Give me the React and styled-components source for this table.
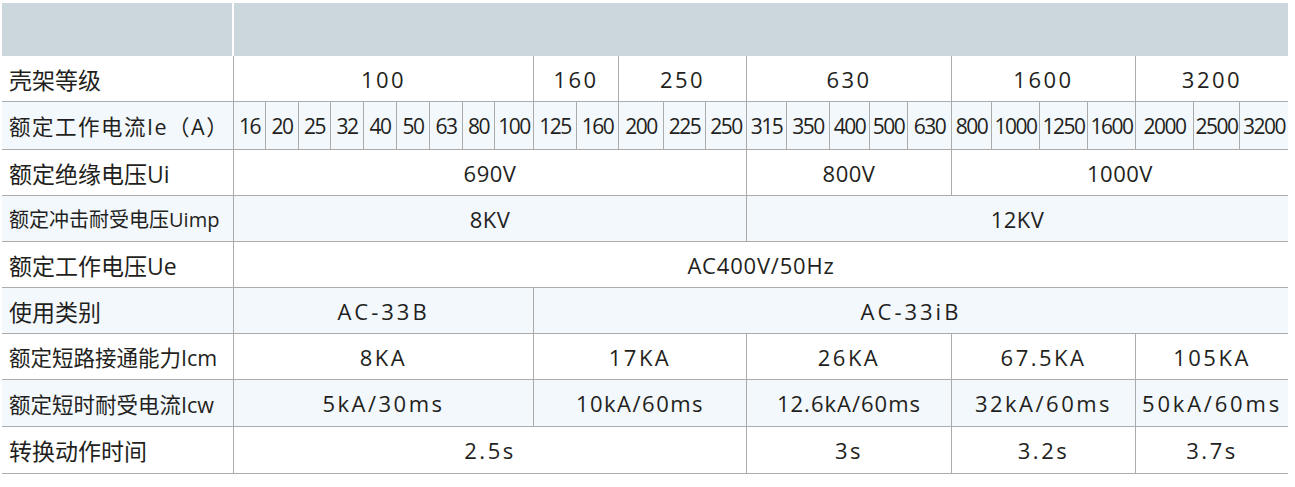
import React from "react";
import styled, { createGlobalStyle } from "styled-components";

const COLS = [231, 32, 33, 32, 33, 33, 33, 33, 32, 39, 43, 42, 45, 42, 41, 40, 43, 40, 38, 44, 40, 48, 48, 48, 58, 46, 49];
const TEMPLATE = COLS.map((w) => `${w}px`).join(" ");

const GlobalStyle = createGlobalStyle`
  html, body { margin: 0; padding: 0; background: #ffffff; }
  body {
    font-family: "Open Sans", "Noto Sans", "Noto Sans CJK SC", sans-serif;
    color: #231f20;
  }
`;

const Page = styled.div`
  padding: 3px 0 0 2px;
  width: 1286px;
`;

const HeaderRow = styled.div`
  display: flex;
  gap: 2px;
  height: 53px;
`;

const HeaderBlock = styled.div`
  background: #cbd6dd;
  width: ${(p) => (p.$w ? `${p.$w}px` : "auto")};
  flex: ${(p) => (p.$w ? "none" : "1")};
`;

const Row = styled.div`
  display: grid;
  grid-template-columns: ${TEMPLATE};
  height: ${(p) => p.$h || 46}px;
  box-sizing: border-box;
  border-bottom: 1px solid #ababab;
  background: ${(p) => (p.$tint ? "#f3f8fd" : "#ffffff")};
`;

const Label = styled.div`
  display: flex;
  align-items: center;
  padding-left: 7px;
  font-size: ${(p) => p.$size || 23}px;
  letter-spacing: ${(p) => p.$ls || 0}px;
  white-space: nowrap;
  color: #231f20;
`;

const Cell = styled.div`
  grid-column: span ${(p) => p.$span || 1};
  display: flex;
  align-items: center;
  justify-content: center;
  border-left: 1px solid #ababab;
  font-size: 22px;
  letter-spacing: ${(p) => (p.$ls !== undefined ? p.$ls : 1)}px;
  white-space: nowrap;
  overflow: hidden;
  color: #231f20;
`;

const NumCell = styled(Cell)`
  font-size: 21px;
  letter-spacing: -1.5px;
  padding-top: 1px;
`;

const IE = [16, 20, 25, 32, 40, 50, 63, 80, 100, 125, 160, 200, 225, 250, 315, 350, 400, 500, 630, 800, 1000, 1250, 1600, 2000, 2500, 3200];

const ROWS = [
  {
    label: "额定绝缘电压Ui",
    cells: [
      ["690V", 14, 0.5],
      ["800V", 5, 0.5],
      ["1000V", 7, 0.5],
    ],
  },
  {
    label: "额定冲击耐受电压Uimp",
    size: 20,
    tint: true,
    cells: [
      ["8KV", 14, 0.5],
      ["12KV", 12, 0.5],
    ],
  },
  { label: "额定工作电压Ue", cells: [["AC400V/50Hz", 26, 0.8]] },
  {
    label: "使用类别",
    tint: true,
    cells: [
      ["AC-33B", 9, 3],
      ["AC-33iB", 17, 3],
    ],
  },
  {
    label: "额定短路接通能力Icm",
    size: 21.5,
    cells: [
      ["8KA", 9, 2.5],
      ["17KA", 5, 2.5],
      ["26KA", 5, 2.5],
      ["67.5KA", 4, 2.5],
      ["105KA", 3, 2.5],
    ],
  },
  {
    label: "额定短时耐受电流Icw",
    size: 21.5,
    tint: true,
    h: 47,
    cells: [
      ["5kA/30ms", 9, 2.5],
      ["10kA/60ms", 5, 1.5],
      ["12.6kA/60ms", 5, 1],
      ["32kA/60ms", 4, 2.5],
      ["50kA/60ms", 3, 2.8],
    ],
  },
  {
    label: "转换动作时间",
    h: 47,
    cells: [
      ["2.5s", 14, 2.5],
      ["3s", 5, 2.5],
      ["3.2s", 4, 2.5],
      ["3.7s", 3, 2.5],
    ],
  },
];

export default function App() {
  return (
    <>
      <GlobalStyle />
      <Page>
        <HeaderRow>
          <HeaderBlock $w={230} />
          <HeaderBlock />
        </HeaderRow>

        <Row>
          <Label>壳架等级</Label>
          <Cell $span={9} $ls={2.5}>100</Cell>
          <Cell $span={2} $ls={2.5}>160</Cell>
          <Cell $span={3} $ls={2.5}>250</Cell>
          <Cell $span={5} $ls={2.5}>630</Cell>
          <Cell $span={4} $ls={2.5}>1600</Cell>
          <Cell $span={3} $ls={2.5}>3200</Cell>
        </Row>

        <Row $tint $h={48}>
          <Label $size={21.5} $ls={1.5}>额定工作电流Ie（A）</Label>
          {IE.map((n) => (
            <NumCell key={n}>{n}</NumCell>
          ))}
        </Row>

        {ROWS.map((r) => (
          <Row key={r.label} $tint={r.tint} $h={r.h}>
            <Label $size={r.size}>{r.label}</Label>
            {r.cells.map(([text, span, ls]) => (
              <Cell key={text} $span={span} $ls={ls}>
                {text}
              </Cell>
            ))}
          </Row>
        ))}
      </Page>
    </>
  );
}
